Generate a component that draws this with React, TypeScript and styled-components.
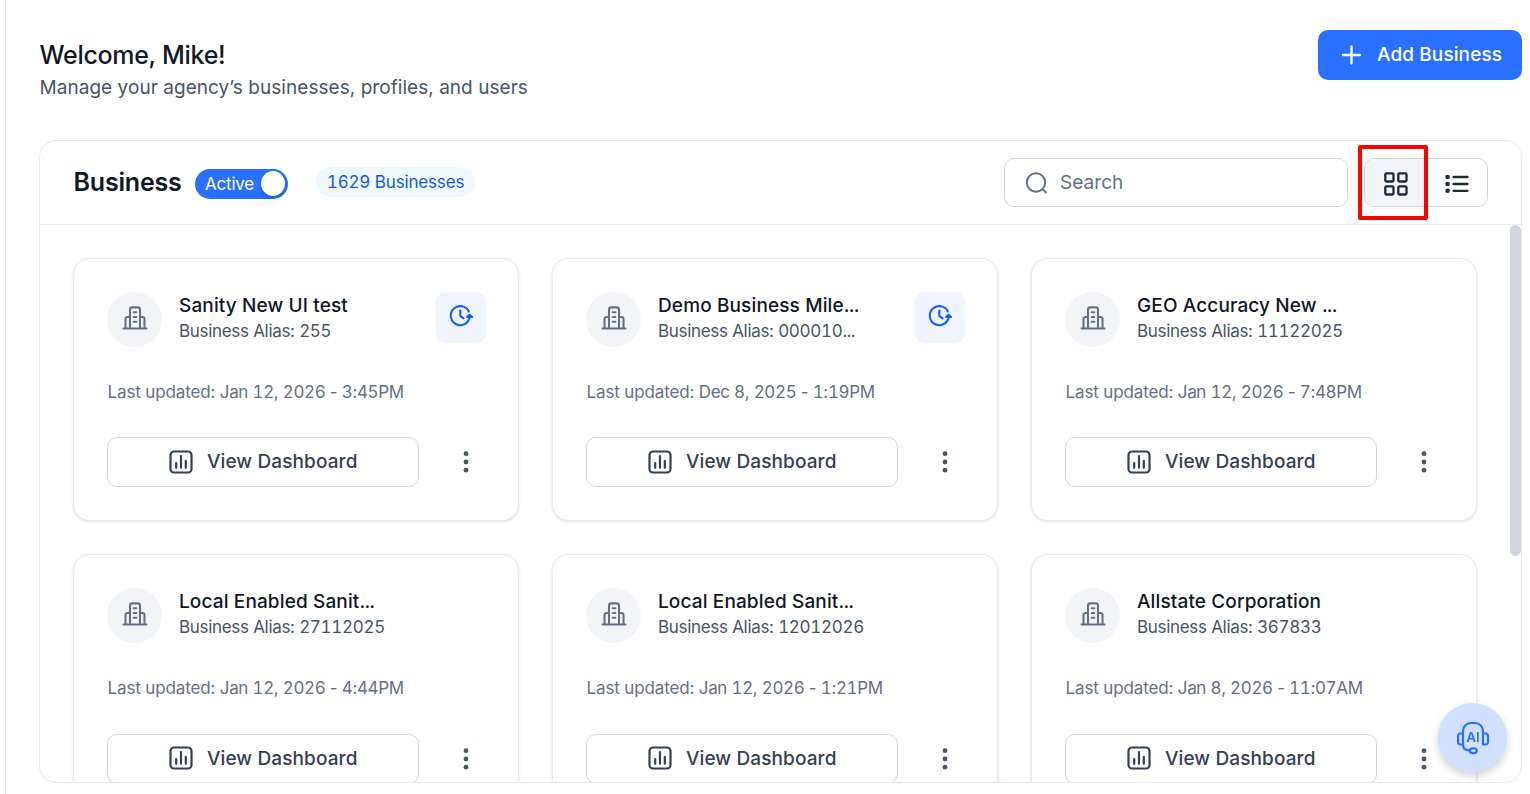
import React from "react";
import styled, { createGlobalStyle } from "styled-components";

const GlobalStyle = createGlobalStyle`
  *, *::before, *::after { box-sizing: border-box; }
  body { margin: 0; background: #fff; font-family: Inter, "Liberation Sans", sans-serif; overflow: hidden; }
  button { font: inherit; cursor: pointer; margin: 0; }
  h1, h2, h3, p { margin: 0; }
  svg { display: block; flex: none; }
`;

const Page = styled.main`
  height: 794px;
  margin-left: 5px;
  border-left: 1px solid #e9eaec;
  padding: 30px 8px 11px 33px;
  display: flex;
  flex-direction: column;
`;

const TopBar = styled.header`
  height: 110px;
  display: flex;
  justify-content: space-between;
  align-items: flex-start;
`;

const Welcome = styled.div`
  padding: 8px 0 0 0.5px;
`;

const WelcomeTitle = styled.h1`
  font-size: 25px;
  line-height: 35px;
  font-weight: 500;
  color: #101828;
  letter-spacing: -0.3px;
`;

const WelcomeText = styled.p`
  font-size: 19px;
  line-height: 30px;
  color: #4a5565;
  letter-spacing: 0.045px;
`;

const AddButton = styled.button`
  width: 204px;
  height: 50px;
  border: 0;
  border-radius: 10px;
  background: #2970ff;
  color: #fff;
  display: flex;
  align-items: center;
  padding: 0 0 1px 23px;
  gap: 14px;
  font-size: 19px;
  font-weight: 500;
  letter-spacing: 0.1px;
  white-space: nowrap;
`;

const Panel = styled.section`
  height: 643px;
  border: 1px solid #e9eaec;
  border-radius: 17px;
  overflow: hidden;
  display: flex;
  flex-direction: column;
`;

const PanelHeader = styled.div`
  height: 84px;
  flex: none;
  border-bottom: 1px solid #e9eaec;
  display: flex;
  align-items: center;
  padding: 0 33px;
`;

const PanelTitle = styled.h2`
  font-size: 25px;
  line-height: 34px;
  font-weight: 600;
  color: #101828;
  width: 122px;
  padding: 0 0 2px 0.5px;
  letter-spacing: -0.18px;
`;

const Toggle = styled.button`
  width: 93px;
  height: 30px;
  margin-top: 2px;
  border: 0;
  border-radius: 15px;
  background: #2970ff;
  color: #fff;
  display: flex;
  align-items: center;
  justify-content: space-between;
  padding: 0 3px 0 10px;
  font-size: 17px;
  letter-spacing: -0.2px;
`;

const Knob = styled.span`
  width: 24px;
  height: 25px;
  border-radius: 50%;
  background: #fff;
  box-shadow: 0 2px 4px rgba(0, 35, 11, 0.25);
`;

const Count = styled.span`
  margin: 0 0 2px 28px;
  width: 159px;
  height: 30px;
  border-radius: 15px;
  background: #eff8ff;
  color: #175cd3;
  font-size: 17px;
  line-height: 30px;
  letter-spacing: -0.17px;
  text-align: center;
  white-space: nowrap;
`;

const Search = styled.label`
  margin-left: auto;
  width: 344px;
  height: 49px;
  border: 1px solid #d0d5dd;
  border-radius: 10px;
  display: flex;
  align-items: center;
  gap: 11px;
  padding: 0 20px;
  color: #667085;
`;

const SearchInput = styled.input`
  border: 0;
  outline: 0;
  width: 240px;
  padding: 0;
  background: none;
  font: 19px/26px Inter, "Liberation Sans", sans-serif;
  letter-spacing: 0.05px;
  color: #101828;
  &::placeholder { color: #667085; opacity: 1; }
`;

const ViewSwitch = styled.div`
  position: relative;
  margin-left: 16px;
  width: 124px;
  height: 49px;
  border: 1px solid #d0d5dd;
  border-radius: 10px;
  display: flex;
`;

const ViewButton = styled.button<{ $on?: boolean }>`
  width: 61px;
  height: 47px;
  padding: ${(p) => (p.$on ? "2px 0 0 1px" : "2px 0 0 0")};
  border: 0;
  border-radius: ${(p) => (p.$on ? "9px 0 0 9px" : "0 9px 9px 0")};
  background: ${(p) => (p.$on ? "#f2f4f7" : "#fff")};
  color: #1d2939;
  display: flex;
  align-items: center;
  justify-content: center;
`;

const Highlight = styled.div`
  position: absolute;
  left: -7px;
  top: -14px;
  width: 70px;
  height: 75px;
  border: 4px solid #ff0000;
  border-radius: 2px;
`;

const Scroller = styled.div`
  flex: 1;
  min-height: 0;
  display: flex;
  overflow: hidden;
`;

const Grid = styled.div`
  flex: 1;
  padding: 33px;
  display: grid;
  grid-template-columns: repeat(3, 446px);
  grid-auto-rows: 263px;
  gap: 33.3px 33px;
`;

const Thumb = styled.div`
  width: 11px;
  height: 331px;
  border-radius: 6px;
  background: #d0d5dd;
`;

const Card = styled.article`
  border: 1px solid #e9eaec;
  border-radius: 17px;
  background: #fff;
  box-shadow: 0 1px 3px rgba(16, 24, 40, 0.14);
  padding: 33px 32.4px 32px 33px;
  display: flex;
  flex-direction: column;
`;

const CardHead = styled.div`
  display: flex;
  height: 55px;
`;

const Avatar = styled.div`
  width: 55px;
  height: 55px;
  border-radius: 50%;
  background: #f2f4f7;
  color: #667085;
  display: flex;
  align-items: center;
  justify-content: center;
  padding-bottom: 3px;
`;

const Names = styled.div`
  flex: 1;
  padding-left: 17px;
  white-space: nowrap;
`;

const Name = styled.h3`
  font-size: 19px;
  line-height: 27px;
  font-weight: 500;
  color: #101828;
  letter-spacing: 0.13px;
`;

const Digits = styled.span`
  font-variant-numeric: tabular-nums;
`;

const Dots = styled.span`
  letter-spacing: -0.8px;
`;

const Alias = styled.p`
  font-size: 17px;
  line-height: 24px;
  color: #475467;
  letter-spacing: -0.31px;
`;

const ClockButton = styled.button`
  width: 50px;
  height: 50px;
  border: 0;
  padding: 0 0 2px 0;
  border-radius: 10px;
  background: #eff4ff;
  color: #155eef;
  box-shadow: 0 1px 2px rgba(16, 24, 40, 0.06);
  display: flex;
  align-items: center;
  justify-content: center;
`;

const Updated = styled.p`
  margin-top: 33px;
  font-size: 17px;
  line-height: 24px;
  color: #667085;
  padding-left: 0.5px;
  letter-spacing: -0.14px;
`;

const Stamp = styled.span`
  letter-spacing: -0.36px;
`;

const Actions = styled.div`
  margin-top: 33.3px;
  display: flex;
  align-items: center;
`;

const ViewDashboard = styled.button`
  width: 312px;
  flex: none;
  height: 50px;
  border: 1px solid #d0d5dd;
  border-radius: 10px;
  background: #fff;
  color: #344054;
  display: flex;
  align-items: center;
  justify-content: center;
  gap: 13.5px;
  padding: 0 0 1px 1px;
  font-size: 19px;
  font-weight: 500;
  letter-spacing: 0.12px;
`;

const More = styled.button`
  width: 50px;
  flex: none;
  height: 50px;
  margin-left: 21.6px;
  border: 0;
  padding: 0;
  background: none;
  color: #475467;
  display: flex;
  align-items: center;
  justify-content: center;
`;

const Assistant = styled.button`
  position: fixed;
  left: 1438px;
  top: 703px;
  width: 69px;
  height: 69px;
  border: 0;
  padding: 0;
  border-radius: 50%;
  background: #d1e0ff;
  color: #2970ff;
  box-shadow: 0 4px 8px rgba(16, 24, 40, 0.2);
  display: flex;
  align-items: center;
  justify-content: center;
`;

const line = { fill: "none", stroke: "currentColor", strokeLinecap: "round", strokeLinejoin: "round" } as const;

const PlusIcon = () => (
  <svg width="22" height="22" viewBox="0 0 22 22" {...line} strokeWidth="2.3">
    <path d="M10.5 2.5v17M2 11h17" />
  </svg>
);

const SearchIcon = () => (
  <svg width="24" height="24" viewBox="0 0 24 24" {...line} strokeWidth="2">
    <circle cx="11" cy="11.5" r="9.2" />
    <path d="M17.8 18.3l3.2 3.2" />
  </svg>
);

const GridIcon = () => (
  <svg width="24" height="24" viewBox="0 0 24 24" {...line} strokeWidth="2.3">
    <rect x="1.3" y="1.3" width="8.2" height="8.2" rx="1.2" />
    <rect x="14.3" y="1.3" width="8.2" height="8.2" rx="1.2" />
    <rect x="1.3" y="14.3" width="8.2" height="8.2" rx="1.2" />
    <rect x="14.3" y="14.3" width="8.2" height="8.2" rx="1.2" />
  </svg>
);

const ListIcon = () => (
  <svg width="24" height="24" viewBox="0 0 24 24" {...line} strokeWidth="2.3">
    <path d="M8.5 5h14M8.5 12h14M8.5 18.8h14" />
    <g fill="currentColor" stroke="none">
      <circle cx="2.6" cy="5" r="2.3" />
      <circle cx="2.6" cy="12" r="2.3" />
      <circle cx="2.6" cy="18.8" r="2.3" />
    </g>
  </svg>
);

const BuildingIcon = () => (
  <svg width="26" height="24" viewBox="0 0 26 24" {...line} strokeWidth="2.1">
    <path d="M1.5 22.5h23M3.5 22V13a2 2 0 0 1 2-2H8M18 11h2.500a2 2 0 0 1 2 2V22M8 22V3.700a2.300 2.300 0 0 1 2.300-2.300h5.400A2.300 2.300 0 0 1 18 3.700V22M11.700 6.200h2.600M11.700 11h2.600M11.700 15.800h2.600" />
  </svg>
);

const ClockIcon = () => (
  <svg width="24" height="24" viewBox="0 0 24 24" {...line} strokeWidth="2.1">
    <path d="M19.8 7.5A9.5 9.5 0 1 0 20.6 13.5" />
    <path d="M11.3 6.5v5.300l3.300 2.500" />
    <path d="M18.100 13l2.500-2.300 2.500 2.300z" fill="currentColor" />
  </svg>
);

const ChartIcon = () => (
  <svg width="24" height="24" viewBox="0 0 24 24" {...line} strokeWidth="2.2">
    <rect x="1.5" y="1.5" width="21" height="21" rx="3.6" />
    <path d="M7.2 13.2v4.600M12 6.200v11.600M16.800 10.800v7" />
  </svg>
);

const DotsIcon = () => (
  <svg width="6" height="22" viewBox="0 0 6 22" fill="currentColor">
    <circle cx="3" cy="2.7" r="2.4" />
    <circle cx="3" cy="11" r="2.4" />
    <circle cx="3" cy="19.2" r="2.4" />
  </svg>
);

const AssistantIcon = () => (
  <svg width="34" height="34" viewBox="0 0 34 34" {...line} strokeWidth="2.2">
    <path d="M7 12V10a8 8 0 0 1 8-8h4a8 8 0 0 1 8 8V12" />
    <path d="M7 12.5H4.500a2.500 2.500 0 0 0-2.500 2.500v6a2.500 2.500 0 0 0 2.500 2.500H7zM27 12.500h2.500a2.500 2.500 0 0 1 2.500 2.500v6a2.500 2.500 0 0 1-2.500 2.500H27z" />
    <path d="M7 23.500c0 4 2.500 6 7 6" />
    <ellipse cx="17.3" cy="29.7" rx="3.5" ry="2.4" />
    <text x="17" y="21.2" textAnchor="middle" fill="currentColor" stroke="none" fontSize="13.5" fontWeight="600">AI</text>
  </svg>
);

const styledText = (text: string) =>
  text.split(/(\d+|\.\.\.)/).map((part, i) => {
    if (i % 2 === 0) return part;
    return part === "..." ? <Dots key={i}>{part}</Dots> : <Digits key={i}>{part}</Digits>;
  });

const businesses = [
  { name: "Sanity New UI test", alias: "255", updated: "Jan 12, 2026 - 3:45PM", pending: true },
  { name: "Demo Business Mile...", alias: "000010...", updated: "Dec 8, 2025 - 1:19PM", pending: true },
  { name: "GEO Accuracy New ...", alias: "11122025", updated: "Jan 12, 2026 - 7:48PM" },
  { name: "Local Enabled Sanit...", alias: "27112025", updated: "Jan 12, 2026 - 4:44PM" },
  { name: "Local Enabled Sanit...", alias: "12012026", updated: "Jan 12, 2026 - 1:21PM" },
  { name: "Allstate Corporation", alias: "367833", updated: "Jan 8, 2026 - 11:07AM" },
];

export default function App() {
  return (
    <>
      <GlobalStyle />
      <Page>
        <TopBar>
          <Welcome>
            <WelcomeTitle>Welcome, Mike!</WelcomeTitle>
            <WelcomeText>Manage your agency’s businesses, profiles, and users</WelcomeText>
          </Welcome>
          <AddButton><PlusIcon />Add Business</AddButton>
        </TopBar>
        <Panel>
          <PanelHeader>
            <PanelTitle>Business</PanelTitle>
            <Toggle>Active<Knob /></Toggle>
            <Count>{styledText("1629 Businesses")}</Count>
            <Search><SearchIcon /><SearchInput placeholder="Search" /></Search>
            <ViewSwitch>
              <ViewButton $on aria-label="Grid view"><GridIcon /></ViewButton>
              <ViewButton aria-label="List view"><ListIcon /></ViewButton>
              <Highlight />
            </ViewSwitch>
          </PanelHeader>
          <Scroller>
            <Grid>
              {businesses.map((b) => (
                <Card key={b.alias}>
                  <CardHead>
                    <Avatar><BuildingIcon /></Avatar>
                    <Names>
                      <Name>{styledText(b.name)}</Name>
                      <Alias>Business Alias: {styledText(b.alias)}</Alias>
                    </Names>
                    {b.pending && <ClockButton aria-label="Pending updates"><ClockIcon /></ClockButton>}
                  </CardHead>
                  <Updated>Last updated: <Stamp>{styledText(b.updated)}</Stamp></Updated>
                  <Actions>
                    <ViewDashboard><ChartIcon />View Dashboard</ViewDashboard>
                    <More aria-label="More actions"><DotsIcon /></More>
                  </Actions>
                </Card>
              ))}
            </Grid>
            <Thumb />
          </Scroller>
        </Panel>
      </Page>
      <Assistant aria-label="AI assistant"><AssistantIcon /></Assistant>
    </>
  );
}
